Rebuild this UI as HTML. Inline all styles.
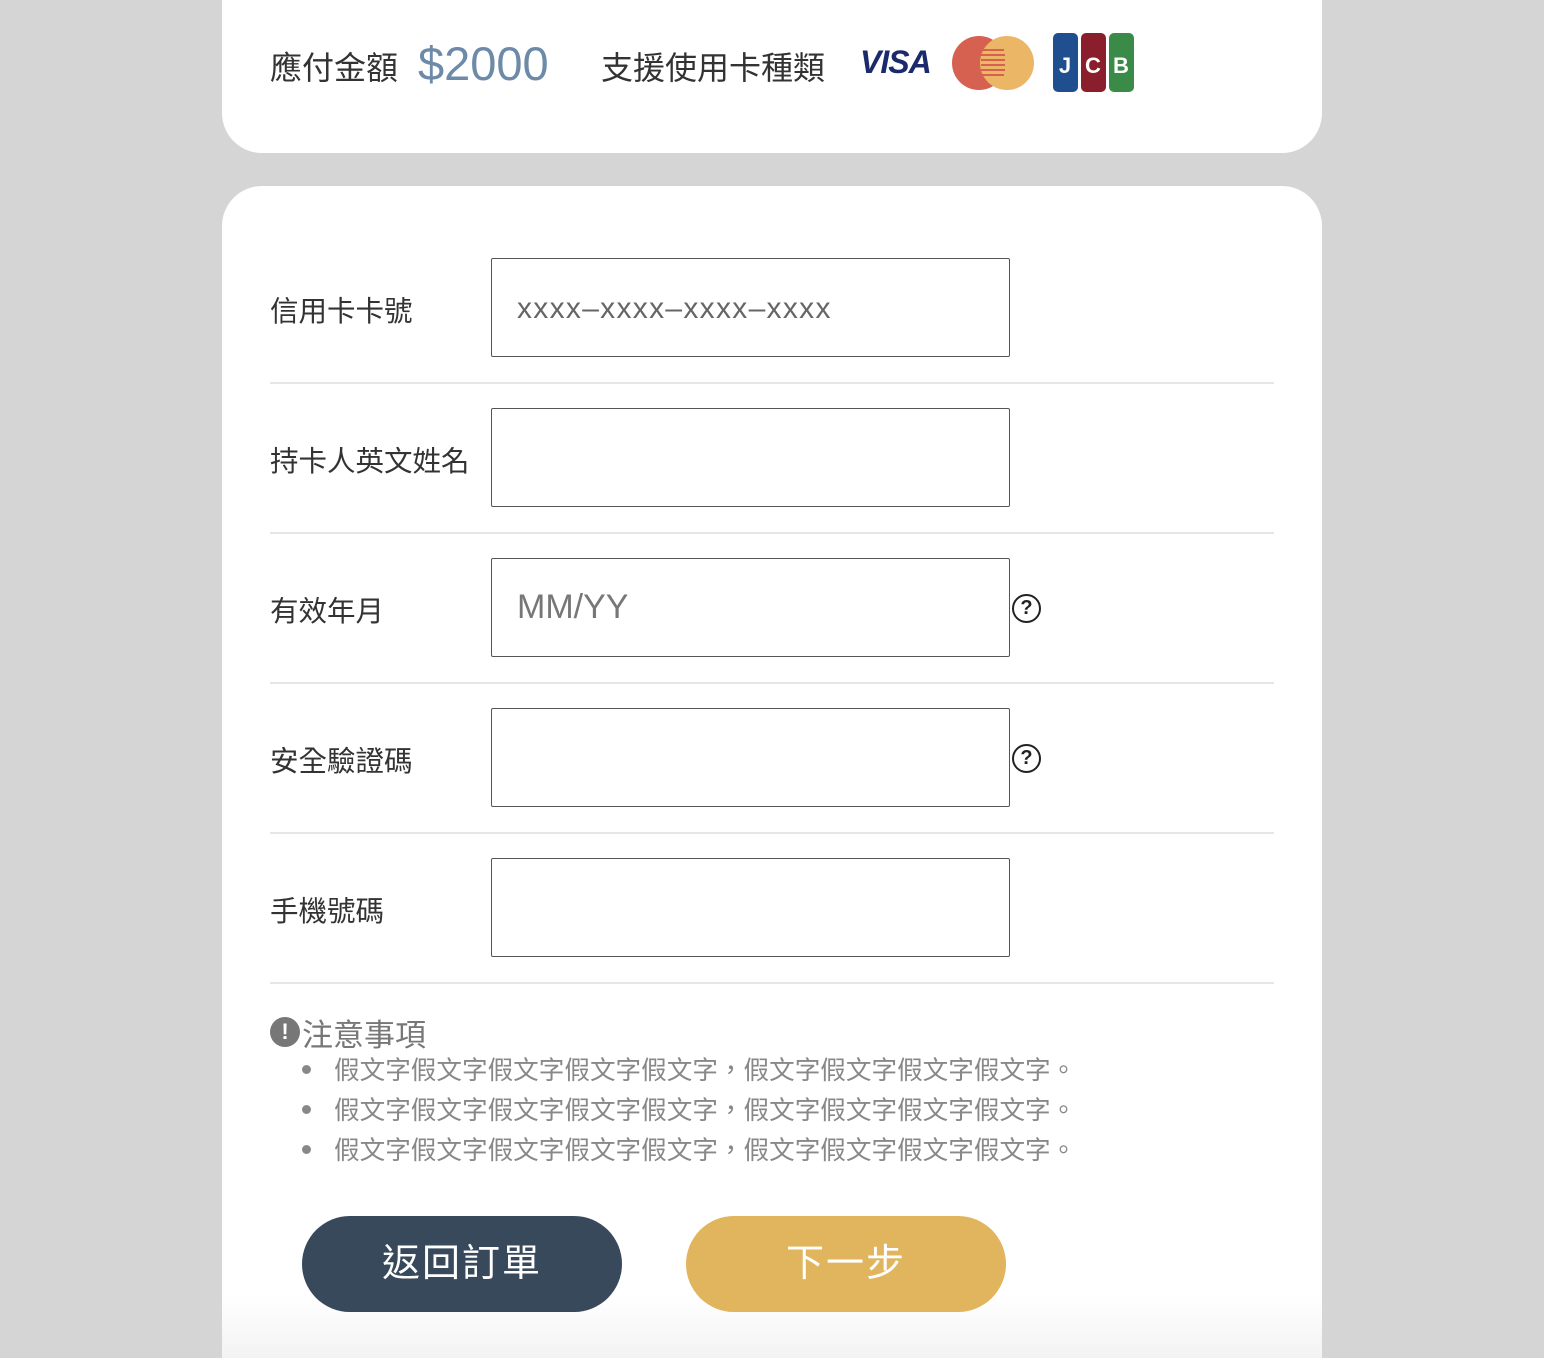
<!DOCTYPE html>
<html style="overflow:hidden;height:1358px"><head><meta charset="utf-8"><style>
*{box-sizing:border-box;margin:0;padding:0}
body{width:1544px;height:1358px;background:#d6d5d6;font-family:"Liberation Sans","Noto Sans CJK TC",sans-serif;position:relative;overflow:hidden;color:#333}
.card{position:absolute;left:222px;width:1100px;background:#fff;border-radius:40px}
.t{position:absolute;white-space:nowrap}
.lab{position:absolute;left:270px;font-size:28.5px;color:#333}
.inp{position:absolute;left:491px;width:519px;height:99px;border:1.5px solid #555;border-radius:2px;background:#fff}
.sep{position:absolute;left:270px;width:1004px;height:2px;background:#e6e6e6}
.q{position:absolute;left:1012px;width:29px;height:29px;border:2.5px solid #222;border-radius:50%;font-size:20px;font-weight:bold;text-align:center;line-height:24px;color:#222}
.li{position:absolute;left:334px;font-size:25.6px;color:#888}
.dot{position:absolute;left:302px;width:9px;height:9px;border-radius:50%;background:#888}
.btn{position:absolute;top:1216px;width:320px;height:96px;border-radius:48px;color:#fff;font-size:38px;text-align:center;line-height:96px;letter-spacing:2px}
</style></head><body>
<div class="card" style="top:-40px;height:193px"></div>
<div class="card" style="top:186px;height:1220px;background:linear-gradient(#fff 0,#fff 1110px,#ededed 1200px)"></div>

<div class="t" style="left:270px;top:43px;font-size:32px">應付金額</div>
<div class="t" style="left:418px;top:36px;font-size:47px;color:#6d8aa8;font-weight:500">$2000</div>
<div class="t" style="left:601px;top:43px;font-size:32px">支援使用卡種類</div>
<div class="t" style="left:860px;top:44px;font-size:32px;font-weight:bold;font-style:italic;color:#1a2a6c;letter-spacing:-1px">VISA</div>
<svg style="position:absolute;left:952px;top:36px" width="84" height="54">
<circle cx="27" cy="27" r="27" fill="#d66150"/><circle cx="55" cy="27" r="27" fill="#ebb666"/>
<g stroke="#d66150" stroke-width="2"><line x1="30" y1="14" x2="52" y2="14"/><line x1="29" y1="19" x2="53" y2="19"/><line x1="29" y1="24" x2="53" y2="24"/><line x1="29" y1="29" x2="53" y2="29"/><line x1="29" y1="34" x2="53" y2="34"/><line x1="30" y1="39" x2="52" y2="39"/></g>
</svg>
<svg style="position:absolute;left:1053px;top:33px" width="82" height="60">
<rect x="0" y="0" width="25" height="59" rx="5" fill="#1f4f8f"/><rect x="28" y="0" width="25" height="59" rx="5" fill="#8b1e2c"/><rect x="56" y="0" width="25" height="59" rx="5" fill="#3a8a48"/>
<text x="12" y="40" font-size="22" font-weight="bold" fill="#fff" text-anchor="middle" font-family="Liberation Sans">J</text>
<text x="40" y="40" font-size="22" font-weight="bold" fill="#fff" text-anchor="middle" font-family="Liberation Sans">C</text>
<text x="68" y="40" font-size="22" font-weight="bold" fill="#fff" text-anchor="middle" font-family="Liberation Sans">B</text>
</svg>

<div class="lab" style="top:289px">信用卡卡號</div>
<div class="inp" style="top:258px"></div>
<div class="t" style="left:517px;top:292px;font-size:30px;letter-spacing:1.3px;color:#666">xxxx–xxxx–xxxx–xxxx</div>
<div class="sep" style="top:382px"></div>

<div class="lab" style="top:439px">持卡人英文姓名</div>
<div class="inp" style="top:408px"></div>
<div class="sep" style="top:532px"></div>

<div class="lab" style="top:589px">有效年月</div>
<div class="inp" style="top:558px"></div>
<div class="t" style="left:517px;top:588px;font-size:34px;color:#777">MM/YY</div>
<div class="q" style="top:594px">?</div>
<div class="sep" style="top:682px"></div>

<div class="lab" style="top:739px">安全驗證碼</div>
<div class="inp" style="top:708px"></div>
<div class="q" style="top:744px">?</div>
<div class="sep" style="top:832px"></div>

<div class="lab" style="top:889px">手機號碼</div>
<div class="inp" style="top:858px"></div>
<div class="sep" style="top:982px"></div>

<div style="position:absolute;left:270px;top:1017px;width:30px;height:30px;border-radius:50%;background:#777;color:#fff;font-size:22px;font-weight:bold;text-align:center;line-height:30px">!</div>
<div class="t" style="left:302px;top:1010px;font-size:31px;color:#777">注意事項</div>
<div class="dot" style="top:1065px"></div><div class="li t" style="top:1050px">假文字假文字假文字假文字假文字，假文字假文字假文字假文字。</div>
<div class="dot" style="top:1105px"></div><div class="li t" style="top:1090px">假文字假文字假文字假文字假文字，假文字假文字假文字假文字。</div>
<div class="dot" style="top:1145px"></div><div class="li t" style="top:1130px">假文字假文字假文字假文字假文字，假文字假文字假文字假文字。</div>

<div class="btn" style="left:302px;background:#38495b">返回訂單</div>
<div class="btn" style="left:686px;background:#e1b55d">下一步</div>
</body></html>
